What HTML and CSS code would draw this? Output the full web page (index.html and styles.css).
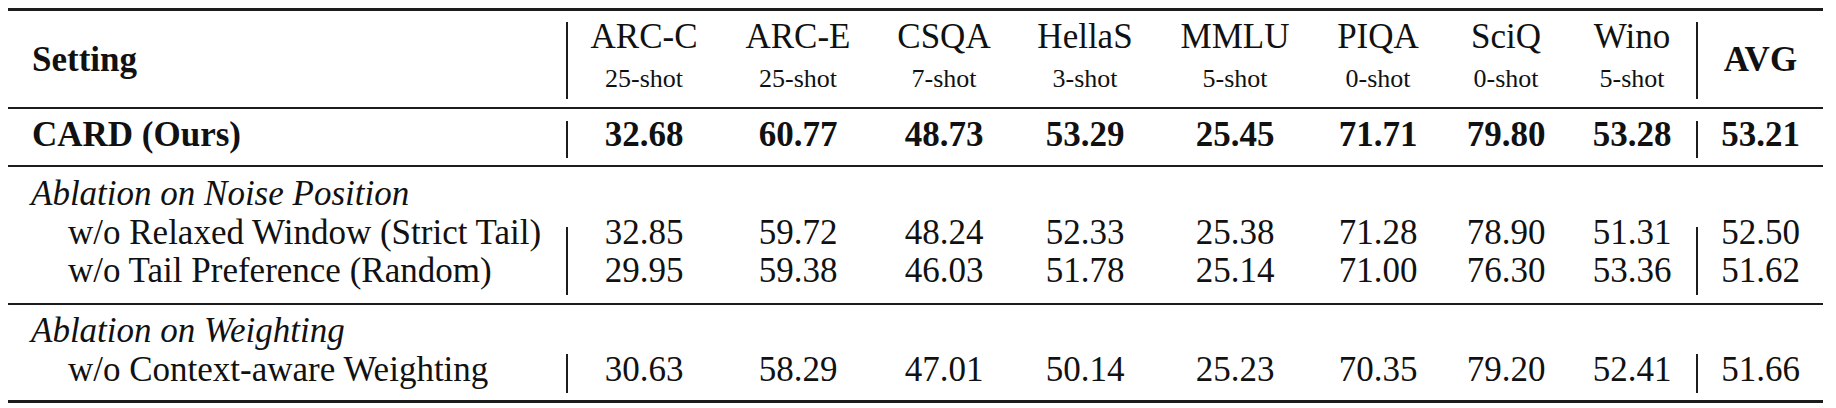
FILE: index.html
```html
<!DOCTYPE html>
<html lang="en">
<head>
    <meta charset="UTF-8">
    <meta name="viewport" content="width=device-width, initial-scale=1.0">
    <title>CARD Ablation Results</title>
    <link rel="stylesheet" href="styles.css">
</head>
<body>
    <div class="results">
        <!-- header -->
        <div class="block head">
            <div class="bar left"></div>
            <div class="bar right"></div>
            <div class="label bold">Setting</div>
            <div class="task">ARC-C<span>25-shot</span></div>
            <div class="task">ARC-E<span>25-shot</span></div>
            <div class="task">CSQA<span>7-shot</span></div>
            <div class="task">HellaS<span>3-shot</span></div>
            <div class="task">MMLU<span>5-shot</span></div>
            <div class="task">PIQA<span>0-shot</span></div>
            <div class="task">SciQ<span>0-shot</span></div>
            <div class="task">Wino<span>5-shot</span></div>
            <div class="num bold">AVG</div>
        </div>

        <!-- ours -->
        <div class="block ours bold">
            <div class="bar left"></div>
            <div class="bar right"></div>
            <div class="label">CARD (Ours)</div>
            <div class="num">32.68</div>
            <div class="num">60.77</div>
            <div class="num">48.73</div>
            <div class="num">53.29</div>
            <div class="num">25.45</div>
            <div class="num">71.71</div>
            <div class="num">79.80</div>
            <div class="num">53.28</div>
            <div class="num">53.21</div>
        </div>

        <!-- noise position -->
        <div class="block group group-noise">
            <div class="bar left"></div>
            <div class="bar right"></div>
            <div class="group-title">Ablation on Noise Position</div>
            <div class="label sub">w/o Relaxed Window (Strict Tail)</div>
            <div class="num">32.85</div>
            <div class="num">59.72</div>
            <div class="num">48.24</div>
            <div class="num">52.33</div>
            <div class="num">25.38</div>
            <div class="num">71.28</div>
            <div class="num">78.90</div>
            <div class="num">51.31</div>
            <div class="num">52.50</div>
            <div class="label sub">w/o Tail Preference (Random)</div>
            <div class="num">29.95</div>
            <div class="num">59.38</div>
            <div class="num">46.03</div>
            <div class="num">51.78</div>
            <div class="num">25.14</div>
            <div class="num">71.00</div>
            <div class="num">76.30</div>
            <div class="num">53.36</div>
            <div class="num">51.62</div>
        </div>

        <!-- weighting -->
        <div class="block group group-weight">
            <div class="bar left"></div>
            <div class="bar right"></div>
            <div class="group-title">Ablation on Weighting</div>
            <div class="label sub">w/o Context-aware Weighting</div>
            <div class="num">30.63</div>
            <div class="num">58.29</div>
            <div class="num">47.01</div>
            <div class="num">50.14</div>
            <div class="num">25.23</div>
            <div class="num">70.35</div>
            <div class="num">79.20</div>
            <div class="num">52.41</div>
            <div class="num">51.66</div>
        </div>
    </div>
</body>
</html>
```

FILE: styles.css
```css
/* Basic Styling */
body {
    margin: 0;
    background-color: #fff;
    color: #111;
    font-family: "Liberation Serif", "Times New Roman", serif;
    font-size: 35px;
}

.results {
    width: 1815px;
    margin: 8px 0 0 8px;
}

/* every block shares the same columns: label | bar | 8 tasks | bar | avg */
.block {
    display: grid;
    grid-template-columns: 558px 2px 152px 156px 136px 146px 154px 132px 124px 128px 2px 125px;
    grid-auto-rows: 38px;
    line-height: 38px;
    border-bottom: 2px solid #1c1c1c;
}

.bold {
    font-weight: bold;
}

.label {
    padding-left: 24px;
    white-space: nowrap;
}

.label.sub {
    padding-left: 60px;
}

.num {
    text-align: center;
}

.bar {
    background-color: #1c1c1c;
}

.bar.left {
    grid-column: 2;
}

.bar.right {
    grid-column: 11;
}

/* Header */
.head {
    border-top: 3px solid #1c1c1c;
    padding: 7px 0 5px;
    grid-template-rows: 84px;
}

.head .bar {
    grid-row: 1;
    margin: 4px 0 3px;
}

.head .label,
.head .num {
    align-self: center;
}

.task {
    display: flex;
    flex-direction: column;
    align-items: center;
}

.task span {
    font-size: 26px;
    line-height: 46px;
}

/* Our row */
.ours {
    padding: 7px 0 11px;
}

.ours .bar {
    grid-row: 1;
    margin: 5px 0 -4px;
}

/* Ablation groups */
.group-title {
    grid-column: 1 / -1;
    font-style: italic;
    line-height: 40px;
    padding-left: 23px;
}

.group-noise {
    padding: 7px 0 13px;
    grid-template-rows: 40px 38px 38px;
}

.group-noise .bar {
    grid-row: 2 / 4;
    margin: 13px 0 -5px;
}

.group-weight {
    padding: 6px 0 11px;
    grid-template-rows: 40px 38px;
    border-bottom-width: 3px;
}

.group-weight .bar {
    grid-row: 2;
    margin: 3px 0 -4px;
}
```
